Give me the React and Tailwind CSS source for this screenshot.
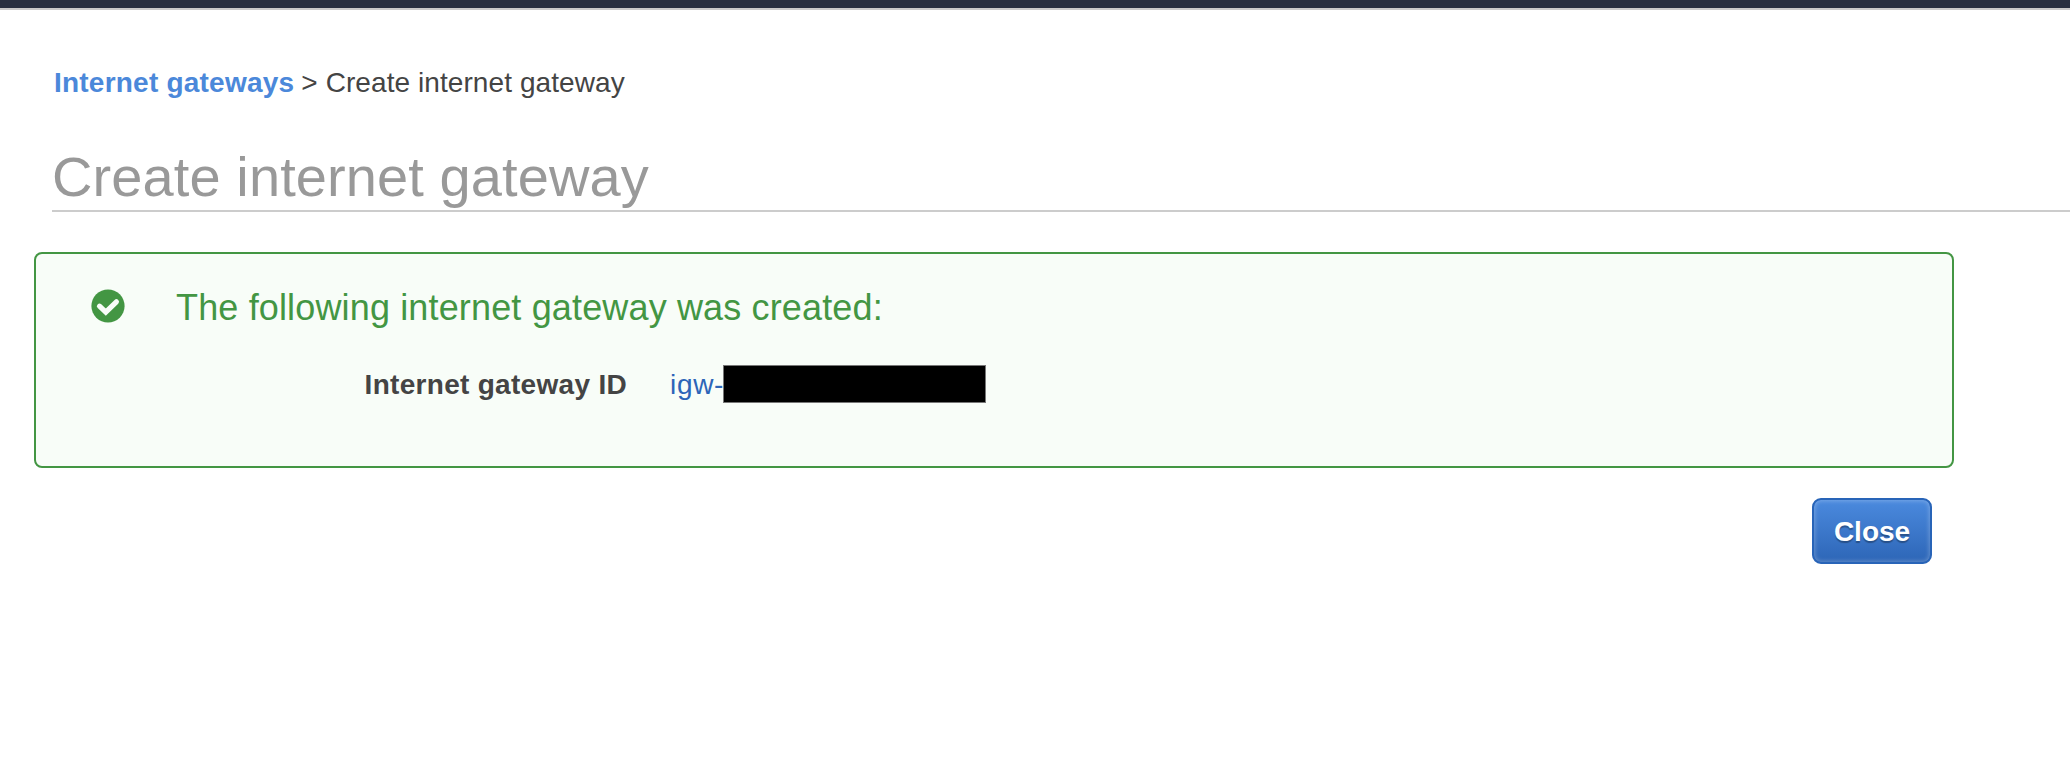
function CheckIcon() {
  return (
    <svg className="mt-[35px] h-[34px] w-[34px] shrink-0" viewBox="0 0 34 34" fill="none">
      <circle cx="17" cy="17" r="16.6" fill="#439643" />
      <path d="M8.5 17.2 L14.8 23.2 L25.4 12.8" stroke="#f8fdf8" strokeWidth="5.2" strokeLinecap="round" />
    </svg>
  );
}

export default function App() {
  return (
    <div className="flex h-[762px] w-full flex-col overflow-hidden bg-white font-['Liberation_Sans',Arial,sans-serif] text-[28px] leading-8 text-[#444]">
      <div className="h-[10px] shrink-0 border-b-2 border-[#c8c9c8] bg-[#272f3f]" />
      <nav className="mt-[57px] ml-[54px] flex h-8 shrink-0 whitespace-nowrap">
        <a className="font-bold tracking-[0.22px] text-[#4b88da]">Internet gateways</a>
        <span className="mr-2 ml-[7px]">&gt;</span>
        <span className="tracking-[0.08px]">Create internet gateway</span>
      </nav>
      <h1 className="mt-[46px] ml-[52px] h-[67px] shrink-0 border-b-2 border-[#ccc] text-[56px] leading-[64px] tracking-[0.1px] whitespace-nowrap text-[#999]">
        Create internet gateway
      </h1>
      <section className="mt-10 ml-[34px] flex h-[216px] w-[1920px] shrink-0 rounded-lg border-2 border-[#439643] bg-[#f8fdf8] pl-[55px]">
        <CheckIcon />
        <div className="ml-[51px] pt-[34px] whitespace-nowrap">
          <h2 className="text-[36px] leading-10 tracking-[0.15px] text-[#439643]">The following internet gateway was created:</h2>
          <dl className="mt-[37px] flex h-[38px] items-center">
            <dt className="w-[451px] pt-px text-right font-bold tracking-[0.3px]">Internet gateway ID</dt>
            <dd className="ml-[43px] flex items-center text-[#2c65b8]">
              <span className="w-[53px] pt-px tracking-[0.7px]">igw-</span>
              <span className="h-[38px] w-[263px] border border-[#777] bg-black" />
            </dd>
          </dl>
        </div>
      </section>
      <button className="mt-[30px] ml-[1812px] h-[66px] w-[120px] shrink-0 rounded-[9px] border-2 border-[#2864b8] bg-linear-to-b from-[#4b8ade] to-[#2d66b7] pt-0.5 font-bold text-white shadow-[inset_0_0_4px_1px_rgba(255,255,255,0.25)] text-shadow-[0_2px_1px_rgba(0,0,0,0.3)]">
        Close
      </button>
    </div>
  );
}
